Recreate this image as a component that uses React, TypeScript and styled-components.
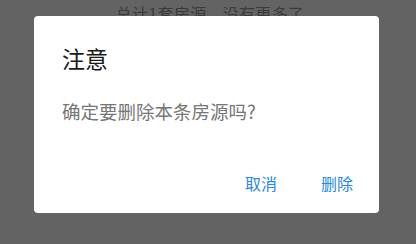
import styled, { createGlobalStyle } from "styled-components"

const Global = createGlobalStyle`
    html, body {
        margin: 0;
        padding: 0;
        width: 416px;
        height: 244px;
        overflow: hidden;
        background: #636363;
        font-family: "Noto Sans CJK SC", "Noto Sans", sans-serif;
    }
`

export default function App(){
    return(
        <Page>
            <Global />
            <FooterNote>总计1套房源，没有更多了</FooterNote>
            <Overlay>
                <Dialog role="dialog">
                    <Title>注意</Title>
                    <Message>确定要删除本条房源吗?</Message>
                    <Actions>
                        <ActionButton>取消</ActionButton>
                        <ActionButton>删除</ActionButton>
                    </Actions>
                </Dialog>
            </Overlay>
        </Page>
    )
}

const Page = styled.div`
    position: relative;
    width: 416px;
    height: 244px;
    display: flex;
    flex-direction: column;
    align-items: center;
`

const FooterNote = styled.div`
    margin-top: 4px;
    padding-left: 4px;
    font-size: 16px;
    line-height: 18px;
    letter-spacing: 0.3px;
    color: #3b3b3b;
`

const Overlay = styled.div`
    position: absolute;
    top: 16px;
    left: 34px;
`

const Dialog = styled.div`
    width: 345px;
    height: 197px;
    box-sizing: border-box;
    background: #fff;
    border-radius: 4px;
    padding: 30px 26px 21px 28px;
    display: flex;
    flex-direction: column;
`

const Title = styled.h2`
    margin: 0;
    font-size: 23px;
    line-height: 25px;
    font-weight: 400;
    color: #1a1a1a;
`

const Message = styled.p`
    margin: 30px 0 0;
    font-size: 18.5px;
    line-height: 21px;
    color: #767676;
`

const Actions = styled.div`
    margin-top: auto;
    display: flex;
    justify-content: flex-end;
    gap: 44px;
`

const ActionButton = styled.button`
    border: none;
    background: transparent;
    padding: 0;
    font-family: inherit;
    font-size: 16px;
    line-height: 18px;
    color: #2a89d8;
    cursor: pointer;
`
